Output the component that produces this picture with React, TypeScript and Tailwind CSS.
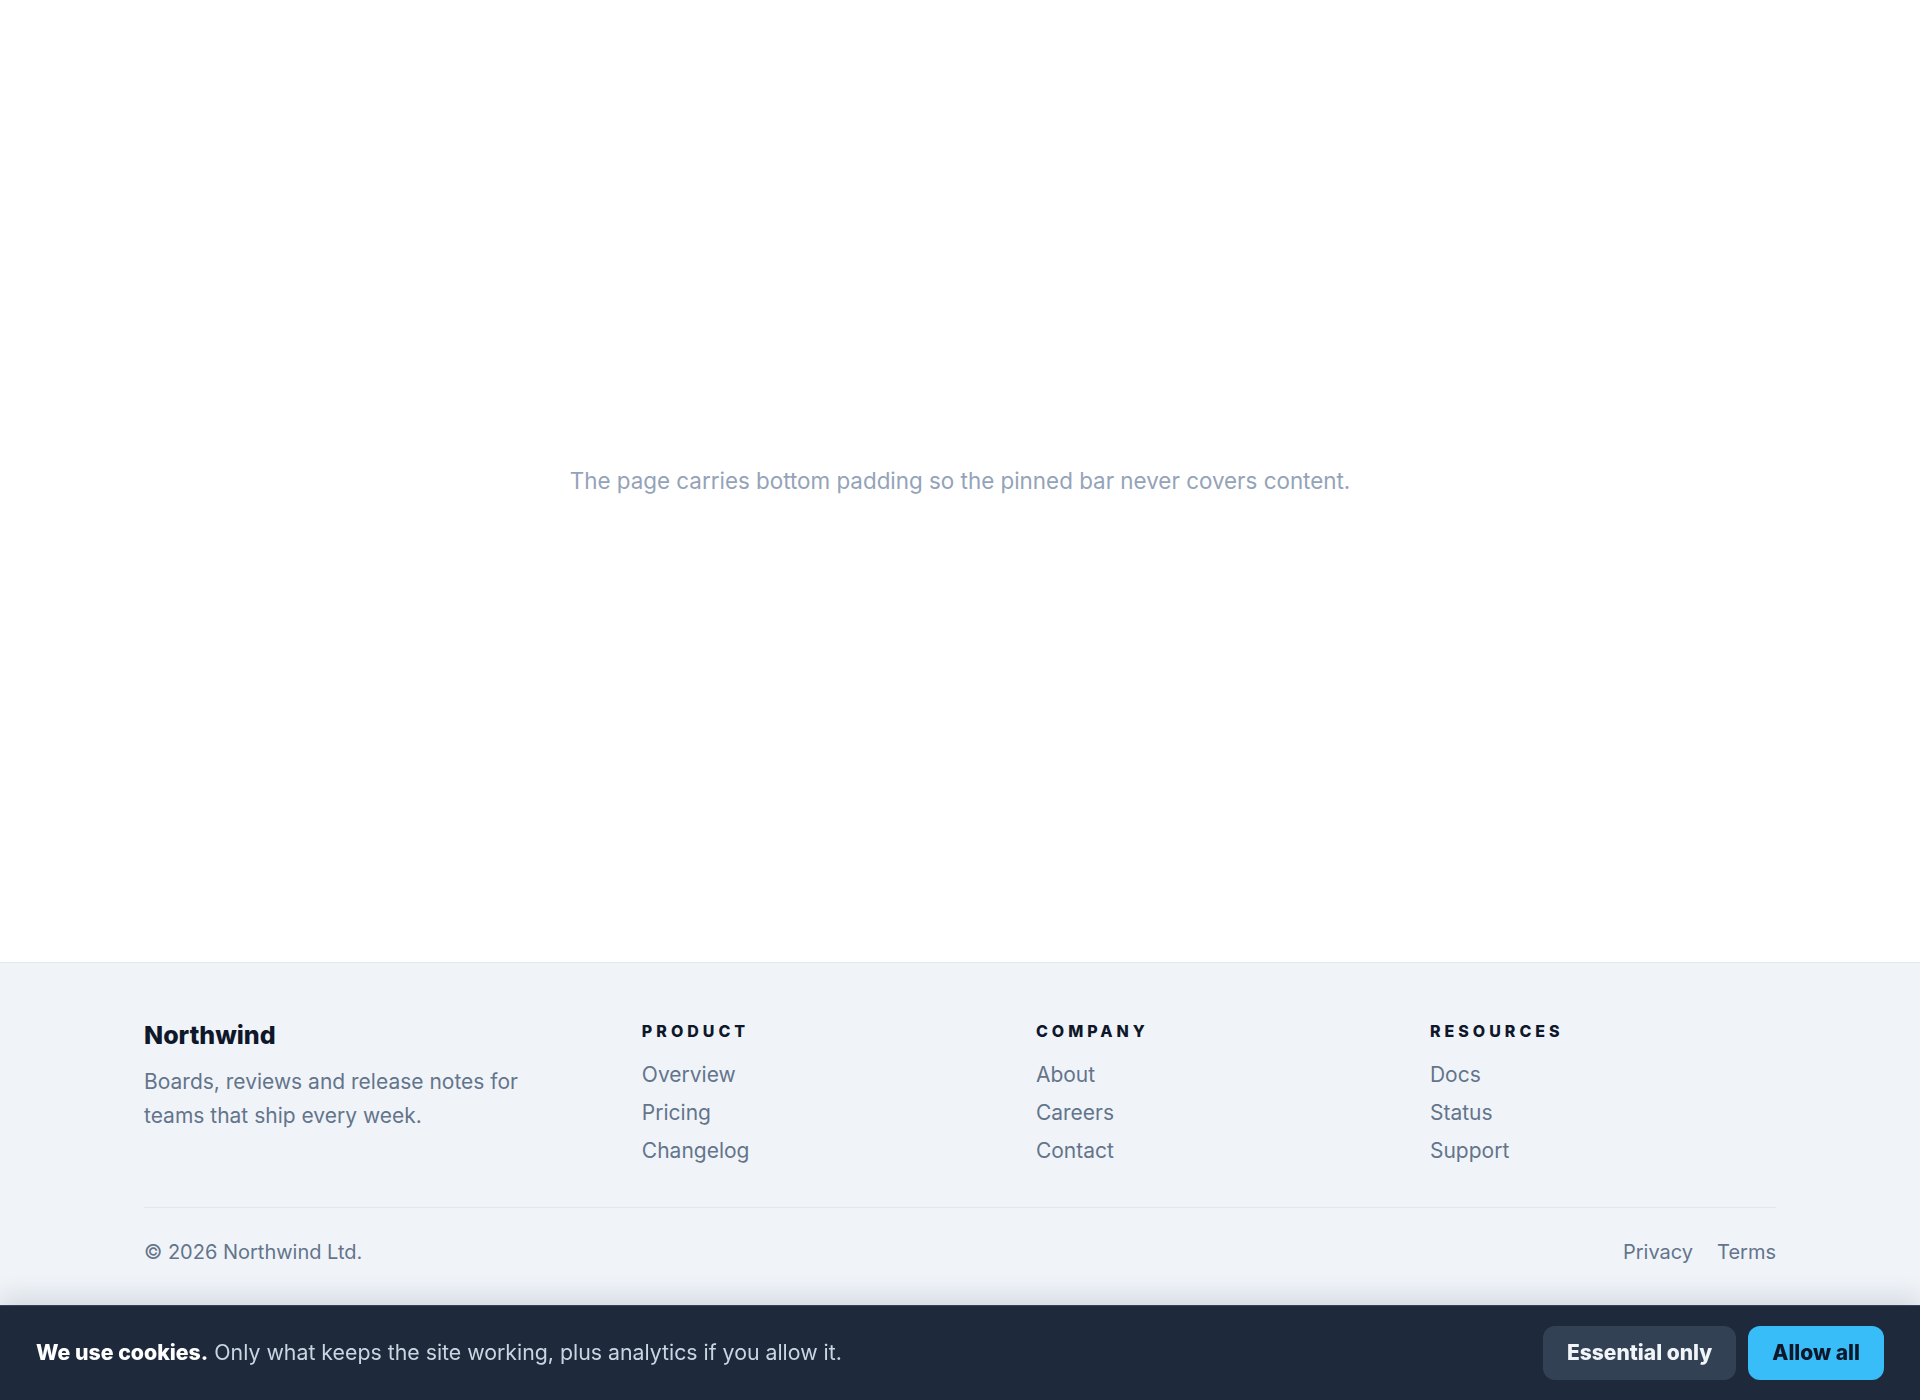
import React from 'react';

const columns = [
  { title: 'Product', links: ['Overview', 'Pricing', 'Changelog'] },
  { title: 'Company', links: ['About', 'Careers', 'Contact'] },
  { title: 'Resources', links: ['Docs', 'Status', 'Support'] },
];

const App: React.FC = () => {
  return (
    <div className="min-h-screen flex flex-col bg-white pb-[94px] font-['Inter','Liberation_Sans',sans-serif]">
      <main className="flex-1 flex items-center justify-center">
        <p className="text-[22.4px] text-[#94a3b8]">
          The page carries bottom padding so the pinned bar never covers content.
        </p>
      </main>

      <footer className="bg-[#f0f4f9] border-t border-[#e2e8f0]">
        <div className="px-36 pt-14 pb-10">
          <div className="grid grid-cols-[1.3fr_1fr_1fr_1fr] gap-12">
            <div>
              <h2 className="text-[25px] leading-8 font-extrabold text-[#0f172a]">Northwind</h2>
              <p className="mt-3.5 text-[21px] leading-[34px] text-[#64748b] max-w-[420px]">
                Boards, reviews and release notes for teams that ship every week.
              </p>
            </div>
            {columns.map((col) => (
              <div key={col.title}>
                <h3 className="text-base font-extrabold uppercase tracking-[0.25em] text-[#0f172a]">
                  {col.title}
                </h3>
                <ul className="mt-[18px] flex flex-col gap-2.5">
                  {col.links.map((link) => (
                    <li key={link}>
                      <a href="#" className="text-[21px] leading-7 text-[#64748b] hover:text-slate-700">
                        {link}
                      </a>
                    </li>
                  ))}
                </ul>
              </div>
            ))}
          </div>

          <div className="mt-[42px] pt-[30px] border-t border-[#e2e8f0] flex items-center justify-between text-xl text-[#64748b]">
            <span>© 2026 Northwind Ltd.</span>
            <div className="flex gap-6">
              <a href="#">Privacy</a>
              <a href="#">Terms</a>
            </div>
          </div>
        </div>
      </footer>

      <div className="fixed bottom-0 inset-x-0 bg-[#1e293b] border-t border-slate-600/60 shadow-[0_-8px_24px_rgba(15,23,42,0.12)]">
        <div className="px-9 py-5 flex items-center justify-between">
          <p className="text-[21.3px] text-[#cbd5e1]">
            <strong className="font-extrabold text-white">We use cookies.</strong> Only what keeps the site working,
            plus analytics if you allow it.
          </p>
          <div className="flex gap-3">
            <button className="px-6 py-[13px] rounded-xl bg-[#334155] text-[#f1f5f9] text-[21px] leading-7 font-extrabold">
              Essential only
            </button>
            <button className="px-6 py-[13px] rounded-xl bg-[#38bdf8] text-[#0f172a] text-[21px] leading-7 font-extrabold">
              Allow all
            </button>
          </div>
        </div>
      </div>
    </div>
  );
};

export default App;
